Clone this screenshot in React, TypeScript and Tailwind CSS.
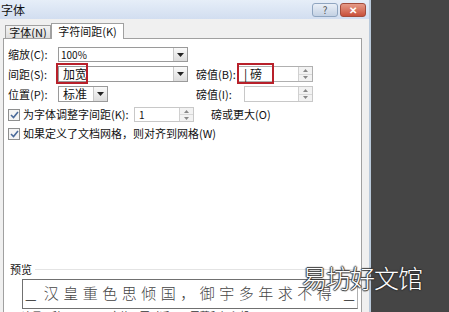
import React from 'react'

const font = { fontFamily: '"Noto Sans CJK SC", "Liberation Sans", sans-serif' }

function Arrow() {
  return (
    <div className="w-[14px] h-full flex items-center justify-center border-l border-[#c8c8c8] bg-gradient-to-b from-[#fafafa] to-[#dcdcdc]">
      <svg width="7" height="4" viewBox="0 0 7 4"><path d="M0 0h7L3.5 4z" fill="#222" /></svg>
    </div>
  )
}

function Spin() {
  return (
    <div className="w-[14px] h-full flex flex-col border-l border-[#d0d0d0] bg-[#f2f2f2]">
      <div className="flex-1 flex items-center justify-center">
        <svg width="5" height="3" viewBox="0 0 5 3"><path d="M0 3h5L2.5 0z" fill="#888" /></svg>
      </div>
      <div className="flex-1 flex items-center justify-center border-t border-[#d8d8d8]">
        <svg width="5" height="3" viewBox="0 0 5 3"><path d="M0 0h5L2.5 3z" fill="#888" /></svg>
      </div>
    </div>
  )
}

function Check() {
  return (
    <div className="w-[12px] h-[12px] shrink-0 border border-[#8e8f8f] bg-[#f4f4f4] flex items-center justify-center">
      <svg width="9" height="8" viewBox="0 0 9 8"><path d="M1 4l2.5 2.5L8 1" stroke="#4a6a9a" strokeWidth="1.6" fill="none" /></svg>
    </div>
  )
}

export default function App() {
  return (
    <div className="w-[449px] h-[312px] flex overflow-hidden relative bg-[#454545] text-[11px] text-[#111] leading-none whitespace-nowrap" style={font}>
      {/* dialog */}
      <div className="w-[371px] h-full shrink-0 flex flex-col bg-[#f0f0f0] border-r-2 border-[#b9c9da]">
        {/* title bar */}
        <div className="h-[19px] shrink-0 flex items-center justify-between bg-gradient-to-b from-[#e6eef8] to-[#d2def0] pr-[3px]">
          <span className="pl-[1px] text-[12px]">字体</span>
          <div className="flex gap-[2px] pt-[1px]">
            <div className="w-[26px] h-[14px] rounded-[3px] border border-[#8fa5c0] bg-gradient-to-b from-[#e9eff7] to-[#c3d1e3] flex items-center justify-center text-[10px] text-[#555]">?</div>
            <div className="w-[26px] h-[14px] rounded-[3px] border border-[#a24c3c] bg-gradient-to-b from-[#e59a88] to-[#c8503a] flex items-center justify-center text-[10px] font-bold text-white">✕</div>
          </div>
        </div>
        <div className="flex-1 flex flex-col pl-[3px] pr-[7px] pt-[3px]">
          {/* tabs */}
          <div className="flex items-end h-[16px] shrink-0 pl-[2px]">
            <div className="h-[13px] w-[46px] flex items-center justify-center border border-b-0 border-[#a0a0a0] bg-gradient-to-b from-[#f4f4f4] to-[#dddddd] text-[11px]">字体(N)</div>
            <div className="h-[16px] w-[73px] -mb-px flex items-center justify-center border border-b-0 border-[#a0a0a0] bg-white text-[11px] relative z-10">字符间距(K)</div>
          </div>
          {/* panel */}
          <div className="border border-[#a0a0a0] bg-white flex flex-col pl-[4px] pt-[8px] h-[300px] shrink-0">
            <div className="flex flex-col gap-[4px]">
              <div className="flex items-center h-[15px]">
                <span className="w-[50px]">缩放(C):</span>
                <div className="w-[130px] h-[15px] flex border border-[#9a9a9a] bg-white">
                  <span className="flex-1 pl-[2px] text-[10px] flex items-center">100%</span>
                  <Arrow />
                </div>
              </div>
              <div className="flex items-center h-[16px]">
                <span className="w-[50px]">间距(S):</span>
                <div className="w-[130px] h-[16px] flex border border-[#9a9a9a] bg-white relative">
                  <span className="flex-1 pl-[4px] flex items-center text-[12px]">加宽</span>
                  <div className="absolute left-[-3px] top-[-4px] w-[32px] h-[21px] border-2 border-[#b8202a]" />
                  <Arrow />
                </div>
                <span className="ml-[8px] w-[42px]">磅值(B):</span>
                <div className="w-[75px] h-[16px] flex border border-[#b0b0b0] bg-white relative">
                  <span className="flex-1 pl-[5px] flex items-center text-[12px]">| 磅</span>
                  <div className="absolute left-[-2px] top-[-4px] w-[37px] h-[21px] border-2 border-[#b8202a]" />
                  <Spin />
                </div>
              </div>
              <div className="flex items-center h-[16px]">
                <span className="w-[50px]">位置(P):</span>
                <div className="w-[50px] h-[16px] flex border border-[#9a9a9a] bg-white">
                  <span className="flex-1 pl-[4px] flex items-center text-[12px]">标准</span>
                  <Arrow />
                </div>
                <span className="ml-[88px] w-[48px]">磅值(I):</span>
                <div className="w-[69px] h-[16px] flex border border-[#c8c8c8] bg-white">
                  <span className="flex-1" />
                  <Spin />
                </div>
              </div>
              <div className="flex items-center h-[15px] mt-[1px]">
                <Check />
                <span className="ml-[3px] w-[111px]">为字体调整字间距(K):</span>
                <div className="w-[60px] h-[15px] flex border border-[#c8c8c8] bg-white">
                  <span className="flex-1 pl-[4px] text-[10px] flex items-center">1</span>
                  <Spin />
                </div>
                <span className="ml-[17px]">磅或更大(O)</span>
              </div>
              <div className="flex items-center h-[15px]">
                <Check />
                <span className="ml-[3px]">如果定义了文档网格，则对齐到网格(W)</span>
              </div>
            </div>
            {/* preview */}
            <div className="flex items-center gap-[3px] pr-[4px] mt-[123px]">
              <span className="text-[11px] pl-[2px]">预览</span>
              <div className="flex-1 h-px bg-[#e4e4e4]" />
            </div>
            <div className="ml-[14px] mr-[3px] mt-[4px] h-[30px] shrink-0 border border-[#707070] border-r-[#b0b0b0] flex items-end justify-between px-[2px] pb-[3px]">
              <span className="text-[13px] text-[#222]">—</span>
              <span className="text-[15px] tracking-[4.5px] text-[#444] self-center" style={{ fontFamily: '"Noto Sans CJK SC", serif', fontWeight: 300 }}>汉皇重色思倾国，御宇多年求不得</span>
              <span className="text-[13px] text-[#222]">—</span>
            </div>
            <div className="ml-[14px] mt-[2px] text-[10px] text-[#333]">这是一种 TrueType 字体，同时适用于屏幕和打印机。</div>
          </div>
        </div>
      </div>
      <div className="flex-1" />
      {/* watermark */}
      <div
        className="absolute left-[302px] top-[265px] text-[25px] text-white tracking-[-1px]"
        style={{ fontFamily: '"Noto Sans CJK SC", sans-serif', fontWeight: 300, textShadow: '1px 0 1px #333, -1px 0 1px #333, 0 1px 1px #333, 0 -1px 1px #333' }}
      >
        易坊好文馆
      </div>
    </div>
  )
}
